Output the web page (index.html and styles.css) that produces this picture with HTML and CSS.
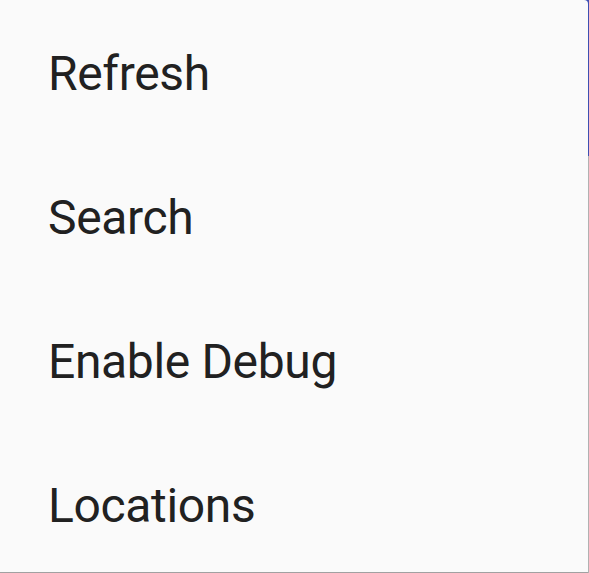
FILE: index.html
```html
<!DOCTYPE html>
<html>
<head>
<meta charset="utf-8">
<link rel="stylesheet" href="styles.css">
</head>
<body>
<div class="screen">
  <div class="appbar"></div>
  <ul class="menu">
    <li class="item">Refresh</li>
    <li class="item">Search</li>
    <li class="item">Enable Debug</li>
    <li class="item">Locations</li>
  </ul>
</div>
</body>
</html>
```
FILE: styles.css
```css
html, body {
  margin: 0;
  padding: 0;
}
body {
  width: 589px;
  height: 573px;
  overflow: hidden;
  background: #b4b4b4;
}
.screen {
  position: relative;
  width: 589px;
  height: 573px;
}
.appbar {
  height: 156px;
  background: #3f51b5;
}
.menu {
  position: absolute;
  top: 0;
  left: 0;
  width: 588px;
  height: 572px;
  margin: 0;
  padding: 0;
  list-style: none;
  background: #fafafa;
  border-top-right-radius: 4px;
  overflow: hidden;
  box-shadow: 0 1px 1px rgba(0,0,0,0.12);
}
.item {
  height: 144px;
  box-sizing: border-box;
  padding-top: 3px;
  display: flex;
  align-items: center;
  padding-left: 48px;
  font-family: Roboto, "Noto Sans", sans-serif;
  font-size: 48px;
  letter-spacing: -0.35px;
  color: #212121;
  line-height: 1;
}
```
